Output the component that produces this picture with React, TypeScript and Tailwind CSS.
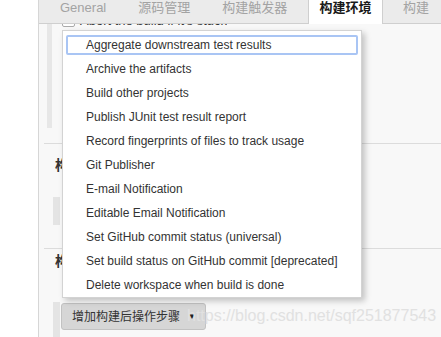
const menuItems = [
  "Aggregate downstream test results",
  "Archive the artifacts",
  "Build other projects",
  "Publish JUnit test result report",
  "Record fingerprints of files to track usage",
  "Git Publisher",
  "E-mail Notification",
  "Editable Email Notification",
  "Set GitHub commit status (universal)",
  "Set build status on GitHub commit [deprecated]",
  "Delete workspace when build is done",
];

function Tabs() {
  return (
    <div className="flex h-[24px] shrink-0 text-[13px] leading-[15px]">
      <div className="flex w-[269px] gap-[32px] pl-[21px] bg-[#ebebeb] border-b border-[#cfcfcf] text-[#a3a3a3]">
        <span>General</span>
        <span>源码管理</span>
        <span>构建触发器</span>
      </div>
      <div className="w-[74px] bg-white border-l border-[#cfcfcf] text-center font-bold text-[#1a1a1a]">
        构建环境
      </div>
      <div className="flex-1 pl-[20px] bg-[#ebebeb] border-l border-b border-[#cfcfcf] text-[#a3a3a3]">
        构建
      </div>
    </div>
  );
}

function PostBuildMenu() {
  return (
    <div className="absolute left-[62px] top-[30px] w-[300px] flex flex-col gap-[4px] bg-white border border-[#d3d3d3] px-[3px] pt-[4px] pb-[2px] shadow-[3px_3px_6px_rgba(0,0,0,0.22)]">
      {menuItems.map((item, i) => (
        <div
          key={item}
          className={
            "h-[20px] pl-[18px] border-2 rounded-[2px] text-[12px] leading-[16px] text-[#333] whitespace-nowrap " +
            (i === 0 ? "border-[#a9c5f4]" : "border-transparent")
          }
        >
          {item}
        </div>
      ))}
    </div>
  );
}

export default function App() {
  return (
    <div className="relative flex w-[441px] h-[337px] overflow-hidden bg-white font-['Liberation_Sans','Noto_Sans_CJK_SC',sans-serif]">
      <div className="w-[38px] shrink-0" />
      <div className="flex-1 flex flex-col bg-[#f8f8f8] border-l border-[#d6d6d6]">
        <Tabs />

        {/* 构建环境 */}
        <div className="ml-[5px] flex h-[120px] shrink-0 border-b border-[#dcdcdc]">
          <div className="ml-[3px] w-[5px] h-[104px] bg-[#e7e7e7]" />
          <div className="pl-[10px]">
            <div className="h-[4px] overflow-hidden">
              <div className="-mt-[11px] flex items-center gap-[5px] text-[13px] leading-[15px] text-[#333]">
                <span className="w-[13px] h-[13px] border border-[#aaa] bg-white rounded-[2px]" />
                <span>Abort the build if it's stuck</span>
              </div>
            </div>
          </div>
        </div>

        {/* 构建 */}
        <div className="ml-[5px] h-[105px] shrink-0 border-b border-[#dcdcdc]">
          <div className="mt-[13px] pl-[11px] text-[14px] leading-[16px] font-bold text-[#333]">构建</div>
          <div className="ml-[9px] mt-[24px] w-[7px] h-[28px] bg-[#e4e4e4]" />
        </div>

        {/* 构建后操作 */}
        <div className="ml-[5px] flex-1">
          <div className="mt-[4px] pl-[11px] text-[14px] leading-[16px] font-bold text-[#333]">构建后操作</div>
          <div className="mt-[33px] flex items-start">
            <div className="ml-[9px] w-[7px] h-[40px] bg-[#e4e4e4]" />
            <button className="ml-[1px] mt-[1px] flex items-center h-[27px] w-[145px] pl-[10px] gap-[8px] bg-[#d6d6d6] border border-[#c2c2c2] rounded-[3px] text-[12px] text-[#333]">
              <span>增加构建后操作步骤</span>
              <span className="text-[8px] text-[#222]">▼</span>
            </button>
          </div>
        </div>
      </div>

      <PostBuildMenu />

      <div className="absolute left-[187px] top-[307px] text-[16px] leading-[18px] text-[#e1e1e1] whitespace-nowrap">
        https://blog.csdn.net/sqf251877543
      </div>
    </div>
  );
}
